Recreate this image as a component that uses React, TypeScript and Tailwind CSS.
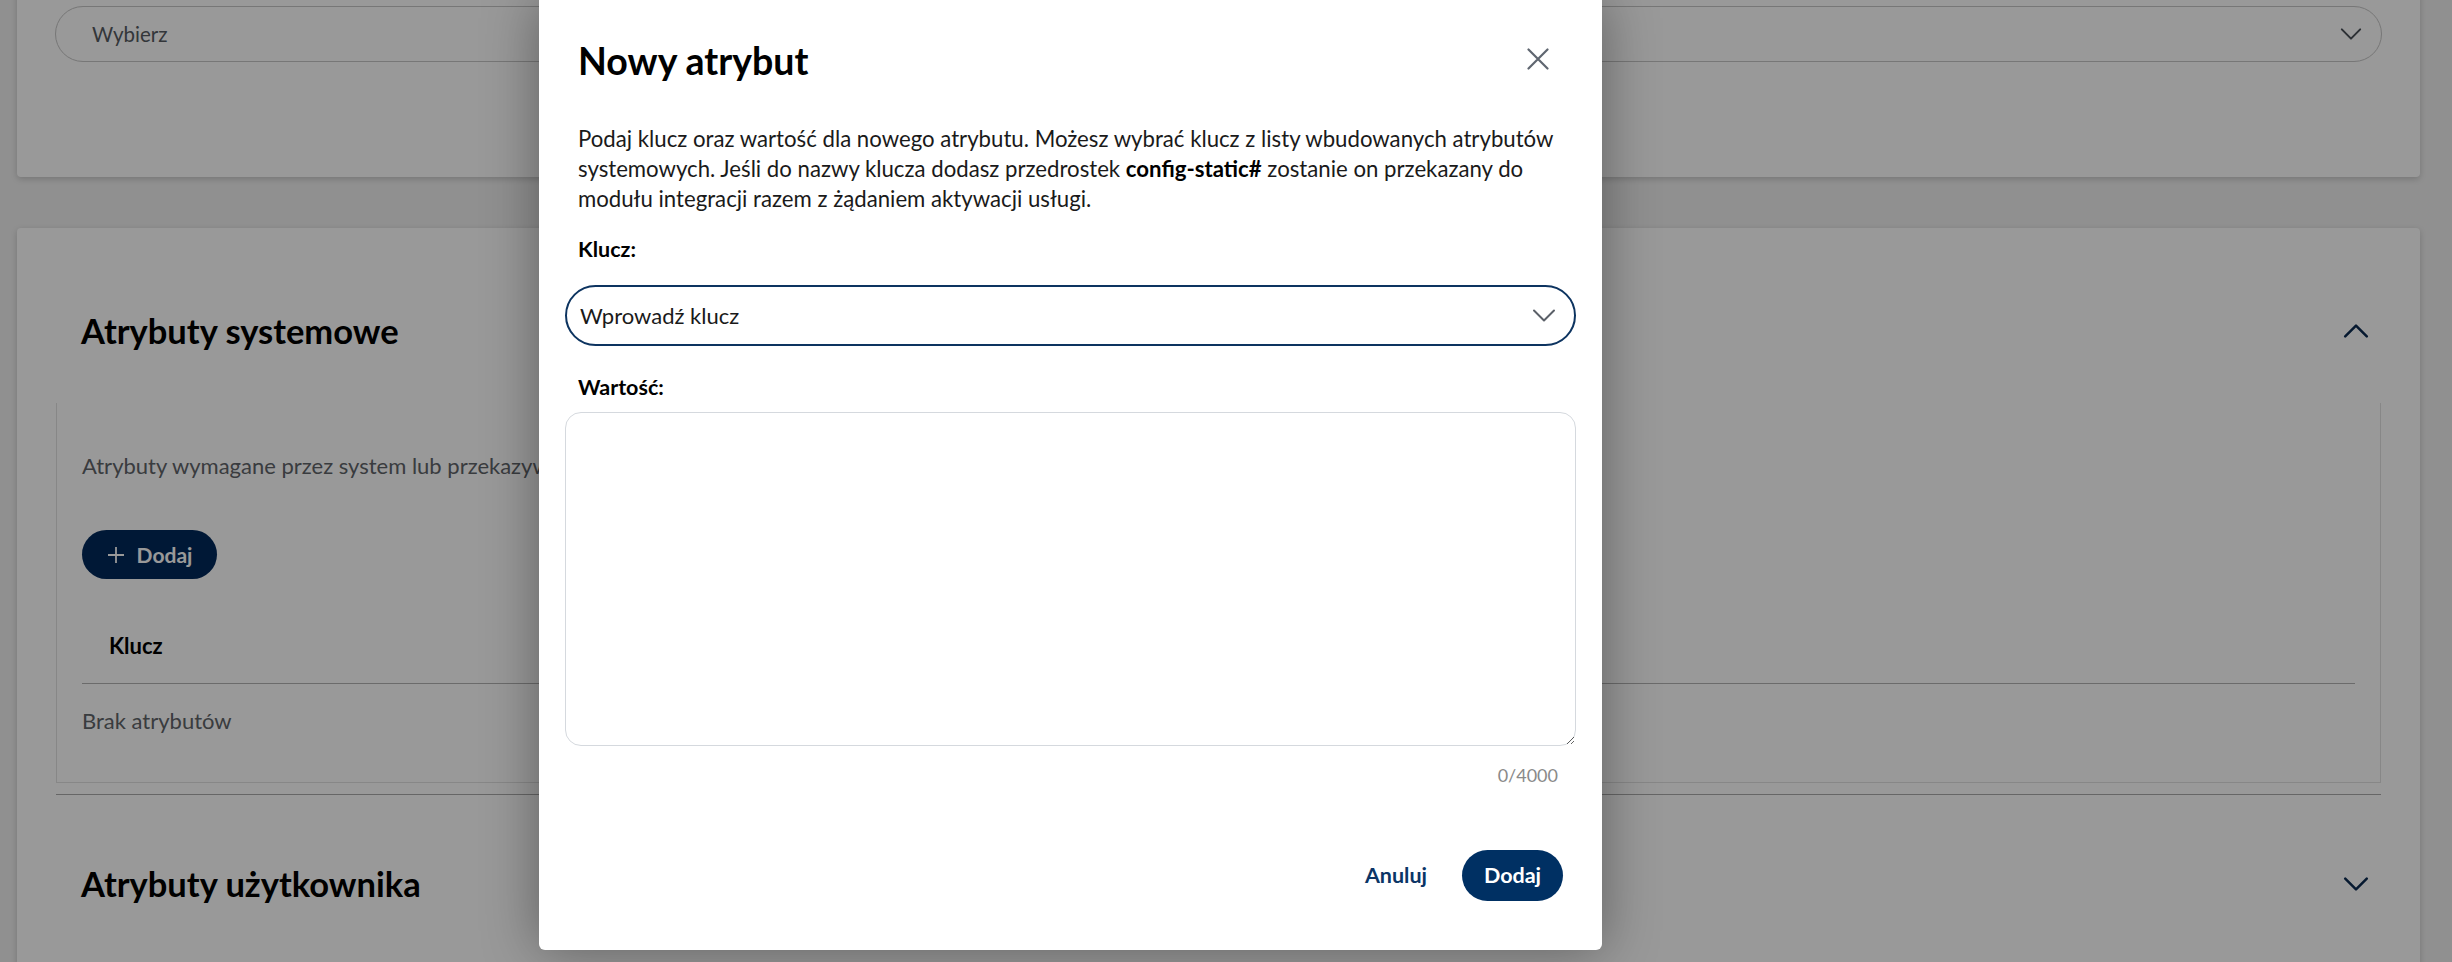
import React from "react";

function Chevron({ up = false, color, w = 24, h = 13, sw = 2 }: { up?: boolean; color: string; w?: number; h?: number; sw?: number }) {
  return (
    <svg width={w} height={h} viewBox="0 0 24 13" fill="none" className="shrink-0">
      <path
        d={up ? "M2 11.5 L12 1.5 L22 11.5" : "M2 1.5 L12 11.5 L22 1.5"}
        stroke={color}
        strokeWidth={sw}
        strokeLinecap="round"
        strokeLinejoin="round"
        vectorEffect="non-scaling-stroke"
      />
    </svg>
  );
}

export default function App() {
  return (
    <div className="relative h-[962px] overflow-hidden bg-[#f0f0f0] [font-family:Lato,'Noto_Sans',sans-serif] text-[#1a1a1a]">
      {/* Page behind */}
      <div className="flex flex-col gap-[51px] pl-[17px] pr-[32px] -mt-[50px]">
        {/* Card 1 */}
        <div className="rounded-[4px] bg-white px-[38px] pt-[56px] pb-[115px] shadow-[0_2px_6px_rgba(0,0,0,0.18)]">
          <div className="flex h-[56px] items-center justify-between rounded-full border border-[#c6c6c6] pl-[36px] pr-[19px]">
            <span className="text-[20.5px] text-[#555b61]">Wybierz</span>
            <Chevron color="#4a5058" w={22} h={12} sw={2} />
          </div>
        </div>

        {/* Card 2 */}
        <div className="rounded-[4px] bg-white px-[39px] pt-[80px] pb-[60px] shadow-[0_2px_6px_rgba(0,0,0,0.18)]">
          <div className="flex h-[46px] items-center justify-between pl-[25px] pr-[12px]">
            <h2 className="text-[34.5px] font-bold leading-[46px] text-black">Atrybuty systemowe</h2>
            <Chevron up color="#0b2a50" w={26} h={14} sw={2.5} />
          </div>

          <div className="mt-[49px] border-x border-b border-[#e2e2e2] px-[25px] pt-[48px] pb-[46px]">
            <p className="text-[22px] leading-[30px] text-[#5f6469]">
              Atrybuty wymagane przez system lub przekazywane do modułu integracji.
            </p>
            <button className="mt-[49px] flex h-[49px] w-[135px] items-center justify-center gap-[12px] rounded-full bg-[#00285a] text-white">
              <svg width="18" height="18" viewBox="0 0 18 18" fill="none">
                <path d="M9 1 V17 M1 9 H17" stroke="white" strokeWidth="1.8" />
              </svg>
              <span className="text-[21px] font-bold">Dodaj</span>
            </button>
            <div className="mt-[29px] flex h-[76px] items-center border-b border-[#b3b3b3] pl-[27px]">
              <span className="text-[22px] font-bold text-black">Klucz</span>
            </div>
            <p className="mt-[22px] text-[22px] leading-[30px] text-[#5f6469]">Brak atrybutów</p>
          </div>

          <div className="mt-[11px] border-t border-[#ababab]" />

          <div className="mt-[66px] flex h-[46px] items-center justify-between pl-[25px] pr-[12px]">
            <h2 className="text-[34.5px] font-bold leading-[46px] text-black">Atrybuty użytkownika</h2>
            <Chevron color="#0b2a50" w={26} h={14} sw={2.5} />
          </div>
        </div>
      </div>

      {/* Overlay */}
      <div className="absolute inset-0 bg-black/40" />

      {/* Modal */}
      <div className="absolute left-[539px] top-0 w-[1063px] rounded-b-[6px] bg-white px-[26px] pt-[39px] pb-[49px] shadow-[0_0_55px_rgba(0,0,0,0.38)]">
        <div className="flex h-[44px] items-center justify-between px-[13px]">
          <h1 className="text-[37.5px] font-bold leading-[44px] text-black">Nowy atrybut</h1>
          <button className="-mt-[5px] mr-[14px] flex h-[22px] w-[22px] items-center justify-center">
            <svg width="22" height="22" viewBox="0 0 22 22" fill="none">
              <path d="M1.5 1.5 L20.5 20.5 M20.5 1.5 L1.5 20.5" stroke="#5f6670" strokeWidth="2.2" strokeLinecap="round" />
            </svg>
          </button>
        </div>

        <p className="mt-[41px] whitespace-nowrap px-[13px] text-[22.2px] leading-[30px] text-[#1a1a1a]">
          Podaj klucz oraz wartość dla nowego atrybutu. Możesz wybrać klucz z listy wbudowanych atrybutów
          <br />
          systemowych. Jeśli do nazwy klucza dodasz przedrostek <b className="font-bold text-black">config-static#</b> zostanie on przekazany do
          <br />
          modułu integracji razem z żądaniem aktywacji usługi.
        </p>

        <div className="mt-[21px] px-[13px] text-[21.5px] font-bold leading-[28px] text-black">Klucz:</div>

        <div className="mt-[22px] flex h-[61px] items-center justify-between rounded-full border-2 border-[#0d3460] pl-[13px] pr-[17px]">
          <span className="text-[22px] text-[#1a1a1a]">Wprowadź klucz</span>
          <Chevron color="#5b6068" w={26} h={13} sw={2} />
        </div>

        <div className="mt-[27px] px-[13px] text-[21.5px] font-bold leading-[28px] text-black">Wartość:</div>

        <textarea className="mt-[11px] block h-[334px] w-full resize-y rounded-[16px] border border-[#d5d9de] bg-white px-[14px] py-[12px] text-[22px] outline-none" />

        <div className="mt-[17px] pr-[18px] text-right text-[18px] leading-[24px] text-[#8a8a8a]">0/4000</div>

        <div className="mt-[63px] flex items-center justify-end gap-[35px] pr-[13px]">
          <button className="text-[21.5px] font-bold text-[#0b3566]">Anuluj</button>
          <button className="flex h-[51px] w-[101px] items-center justify-center rounded-full bg-[#003063] text-[21.5px] font-bold text-white">
            Dodaj
          </button>
        </div>
      </div>
    </div>
  );
}
